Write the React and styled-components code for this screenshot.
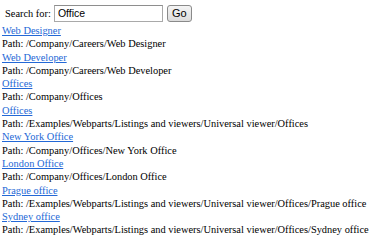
import React from "react";
import styled, { createGlobalStyle } from "styled-components";

const GlobalStyle = createGlobalStyle`
  body {
    margin: 0;
    background: #fff;
    font-family: "Liberation Serif", "Times New Roman", serif;
    font-size: 10.4px;
    color: #000;
  }
`;

const Page = styled.div`
  padding: 4px 2px 0 2px;
`;

const SearchBar = styled.form`
  display: flex;
  align-items: center;
  padding-left: 3px;
  height: 18px;
  margin-bottom: 2px;
`;

const Label = styled.label`
  margin-right: 3px;
`;

const SearchInput = styled.input`
  box-sizing: border-box;
  width: 109px;
  height: 17px;
  border: 1px solid #a9a9a9;
  border-top-color: #8e8e8e;
  padding: 0 3px;
  font-family: "Liberation Sans", Arial, sans-serif;
  font-size: 10.5px;
  color: #000;
  outline: none;
`;

const GoButton = styled.button`
  box-sizing: border-box;
  margin-left: 4px;
  width: 25px;
  height: 17px;
  padding: 0;
  border: 1px solid #8a8a8a;
  border-radius: 3px;
  background: linear-gradient(#f4f4f4, #dcdcdc);
  font-family: "Liberation Sans", Arial, sans-serif;
  font-size: 11px;
  color: #000;
`;

const Result = styled.div`
  line-height: 13.3px;
  white-space: nowrap;
`;

const ResultLink = styled.a`
  color: #2368d6;
  text-decoration: underline;
`;

const results = [
  ["Web Designer", "/Company/Careers/Web Designer"],
  ["Web Developer", "/Company/Careers/Web Developer"],
  ["Offices", "/Company/Offices"],
  ["Offices", "/Examples/Webparts/Listings and viewers/Universal viewer/Offices"],
  ["New York Office", "/Company/Offices/New York Office"],
  ["London Office", "/Company/Offices/London Office"],
  ["Prague office", "/Examples/Webparts/Listings and viewers/Universal viewer/Offices/Prague office"],
  ["Sydney office", "/Examples/Webparts/Listings and viewers/Universal viewer/Offices/Sydney office"],
];

function App() {
  return (
    <Page>
      <GlobalStyle />
      <SearchBar onSubmit={(e) => e.preventDefault()}>
        <Label>Search for:</Label>
        <SearchInput defaultValue="Office" />
        <GoButton type="submit">Go</GoButton>
      </SearchBar>
      {results.map(([title, path], i) => (
        <Result key={i}>
          <ResultLink href="#">{title}</ResultLink>
          <div>Path: {path}</div>
        </Result>
      ))}
    </Page>
  );
}

export default App;
